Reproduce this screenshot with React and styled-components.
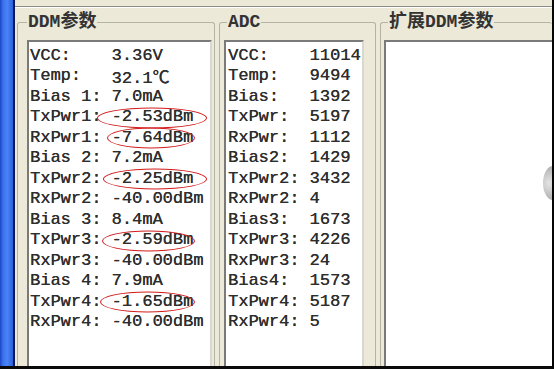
import React from 'react'
import styled, { createGlobalStyle } from 'styled-components'

const GlobalStyle = createGlobalStyle`
    body{
        margin: 0;
        background: #ece9d8;
        overflow: hidden;
    }
`

const MONO = `"Liberation Mono", "Noto Sans CJK SC", monospace`

const Window = styled.div`
    position: relative;
    width: 554px;
    height: 369px;
    box-sizing: border-box;
    display: flex;
    background: #ece9d8;
    border-right: 2px solid #050505;
    border-bottom: 3px solid #0a0a0a;
    overflow: hidden;
    font-family: ${MONO};
`
const BlueFrame = styled.div`
    width: 13px;
    flex: none;
    background: linear-gradient(90deg, #1d47c4 0, #3a74ee 25%, #4a84f6 55%, #2c60dc 100%);
    border-right: 2px solid #0c1a5a;
`
const Main = styled.div`
    flex: 1;
    display: flex;
    flex-direction: column;
    min-width: 0;
`
const TopStrip = styled.div`
    height: 6px;
    flex: none;
    border-bottom: 1px solid #8c8c84;
    box-shadow: 0 1px 0 #ffffff;
`
const GroupRow = styled.div`
    flex: 1;
    display: flex;
    gap: ${p => p.$gap}px;
    padding: 6px 0 0 2px;
    min-height: 0;
`
const Group = styled.fieldset`
    box-sizing: border-box;
    margin: 0;
    width: ${p => (p.$width ? `${p.$width}px` : 'auto')};
    flex: ${p => (p.$width ? 'none' : '1')};
    min-width: 0;
    display: flex;
    flex-direction: column;
    padding: 0 ${p => p.$pr}px 0 ${p => p.$pl}px;
    border: 1px solid #b4b4a6;
    border-bottom: none;
    border-right: ${p => (p.$open ? 'none' : '1px solid #b4b4a6')};
    border-radius: 3px 3px 0 0;
`
const Legend = styled.legend`
    margin-left: ${p => p.$ml || 0}px;
    padding: 0 1px;
    font-size: 18px;
    line-height: 19px;
    font-weight: bold;
    color: #333333;
    white-space: nowrap;
`
const List = styled.div`
    flex: 1;
    margin-top: 8px;
    background: #ffffff;
    border: 2px solid;
    border-color: #7a7a7a #d8d8d0 #d8d8d0 #7a7a7a;
    border-bottom: none;
    border-right: ${p => (p.$open ? 'none' : '2px solid #d8d8d0')};
    padding: 3px 0 0 ${p => p.$pl}px;
    overflow: hidden;
`
const Row = styled.div`
    display: flex;
    height: 20.5px;
    align-items: center;
    font-size: 17px;
    color: #2e2e2e;
    text-shadow: 0.25px 0 0 #2e2e2e;
    white-space: pre;
`
const Label = styled.span`
    width: 8ch;
    flex: none;
`
const Value = styled.span`
    position: relative;

    &::after{
        content: '';
        display: ${p => (p.$ring ? 'block' : 'none')};
        position: absolute;
        left: -${p => (p.$ring ? p.$ring[0] : 0)}px;
        right: -${p => (p.$ring ? p.$ring[1] : 0)}px;
        top: 50%;
        height: 19px;
        transform: translateY(-45%);
        border: 1.5px solid #d21c1c;
        border-radius: 50%;
    }
`
const EdgeBlob = styled.div`
    position: absolute;
    left: 543px;
    top: 166px;
    width: 20px;
    height: 34px;
    border-radius: 50%;
    background: radial-gradient(ellipse at 30% 50%, #e4e4e4 0, #b8b8b8 60%, #a0a0a0 100%);
`

const ddm = [
    ['VCC:', '3.36V'],
    ['Temp:', '32.1℃'],
    ['Bias 1:', '7.0mA'],
    ['TxPwr1:', '-2.53dBm', [15, 14]],
    ['RxPwr1:', '-7.64dBm', [5, 2]],
    ['Bias 2:', '7.2mA'],
    ['TxPwr2:', '-2.25dBm', [9, 14]],
    ['RxPwr2:', '-40.00dBm'],
    ['Bias 3:', '8.4mA'],
    ['TxPwr3:', '-2.59dBm', [10, 2]],
    ['RxPwr3:', '-40.00dBm'],
    ['Bias 4:', '7.9mA'],
    ['TxPwr4:', '-1.65dBm', [12, 2]],
    ['RxPwr4:', '-40.00dBm'],
]

const adc = [
    ['VCC:', '11014'],
    ['Temp:', '9494'],
    ['Bias:', '1392'],
    ['TxPwr:', '5197'],
    ['RxPwr:', '1112'],
    ['Bias2:', '1429'],
    ['TxPwr2:', '3432'],
    ['RxPwr2:', '4'],
    ['Bias3:', '1673'],
    ['TxPwr3:', '4226'],
    ['RxPwr3:', '24'],
    ['Bias4:', '1573'],
    ['TxPwr4:', '5187'],
    ['RxPwr4:', '5'],
]

const Rows = ({ items }) => items.map(([label, value, ring]) => (
    <Row key={label}>
        <Label>{label}</Label>
        <Value $ring={ring}>{value}</Value>
    </Row>
))

const App = () => {
    return (
        <Window>
            <GlobalStyle />
            <BlueFrame />
            <Main>
                <TopStrip />
                <GroupRow $gap={4}>
                    <Group $width={198} $pl={9} $pr={2}>
                        <Legend>DDM参数</Legend>
                        <List $pl={1}>
                            <Rows items={ddm} />
                        </List>
                    </Group>
                    <Group $width={157} $pl={4} $pr={11}>
                        <Legend $ml={3}>ADC</Legend>
                        <List $pl={2}>
                            <Rows items={adc} />
                        </List>
                    </Group>
                    <Group $pl={3} $pr={0} $open>
                        <Legend $ml={4}>扩展DDM参数</Legend>
                        <List $pl={2} $open />
                    </Group>
                </GroupRow>
            </Main>
            <EdgeBlob />
        </Window>
    )
}

export default App
